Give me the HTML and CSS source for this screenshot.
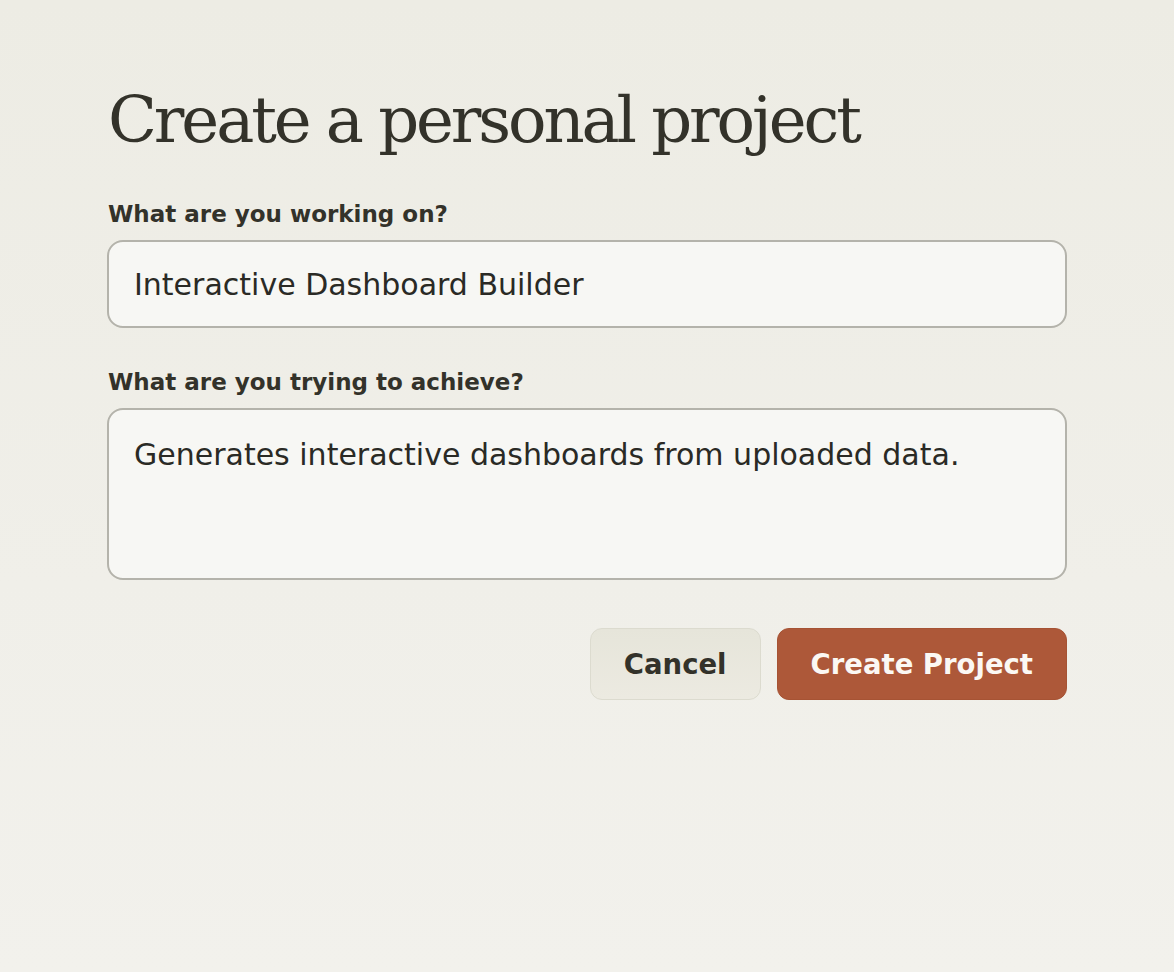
FILE: index.html
```html
<!DOCTYPE html>
<html>
<head>
<meta charset="utf-8">
<link rel="stylesheet" href="styles.css">
</head>
<body>
<main class="page">
  <h1 class="title">Create a personal project</h1>
  <form class="form">
    <label class="field">
      <span class="label">What are you working on?</span>
      <input class="input" type="text" value="Interactive Dashboard Builder">
    </label>
    <label class="field">
      <span class="label">What are you trying to achieve?</span>
      <textarea class="textarea">Generates interactive dashboards from uploaded data.</textarea>
    </label>
    <div class="actions">
      <button type="button" class="btn btn-cancel">Cancel</button>
      <button type="button" class="btn btn-primary">Create Project</button>
    </div>
  </form>
</main>
</body>
</html>
```
FILE: styles.css
```css
html, body {
  margin: 0;
  padding: 0;
  height: 100%;
}
body {
  background: linear-gradient(180deg, #edece4 0%, #f0efe9 60%, #f2f1ec 100%);
  color: #33322a;
  font-family: "DejaVu Sans", sans-serif;
}
.page {
  width: 960px;
  margin: 0 auto;
  padding-top: 80px;
}
.title {
  margin: 0 0 0 1px;
  font-family: "DejaVu Serif", serif;
  font-weight: 400;
  font-size: 64px;
  line-height: 80px;
  letter-spacing: -3.1px;
  color: #33322a;
}
.form {
  display: flex;
  flex-direction: column;
  margin-top: 40px;
}
.field {
  display: flex;
  flex-direction: column;
  gap: 12px;
  margin-bottom: 40px;
}
.label {
  font-size: 23px;
  font-weight: 700;
  padding-left: 1px;
  line-height: 28px;
  color: #33322a;
}
.input, .textarea {
  box-sizing: border-box;
  width: 100%;
  border: 2px solid #b4b3ab;
  border-radius: 16px;
  background: #f7f7f4;
  color: #2a2a25;
  font-family: "DejaVu Sans", sans-serif;
  font-size: 30px;
  padding: 0 25px;
  outline: none;
}
.input {
  height: 88px;
}
.textarea {
  height: 172px;
  padding-top: 25px;
  resize: none;
  line-height: 40px;
}
.actions {
  display: flex;
  justify-content: flex-end;
  gap: 16px;
  margin-top: 8px;
}
.btn {
  box-sizing: border-box;
  height: 72px;
  border-radius: 12px;
  font-family: "DejaVu Sans", sans-serif;
  font-size: 27.5px;
  font-weight: 700;
  padding: 0 33px;
  cursor: pointer;
}
.btn-cancel {
  background: linear-gradient(180deg, #e6e5da, #eceae1);
  border: 1px solid #dcdbcf;
  color: #33322a;
}
.btn-primary {
  background: #ad5839;
  border: 1px solid #a65334;
  color: #fbf8f4;
}
```
